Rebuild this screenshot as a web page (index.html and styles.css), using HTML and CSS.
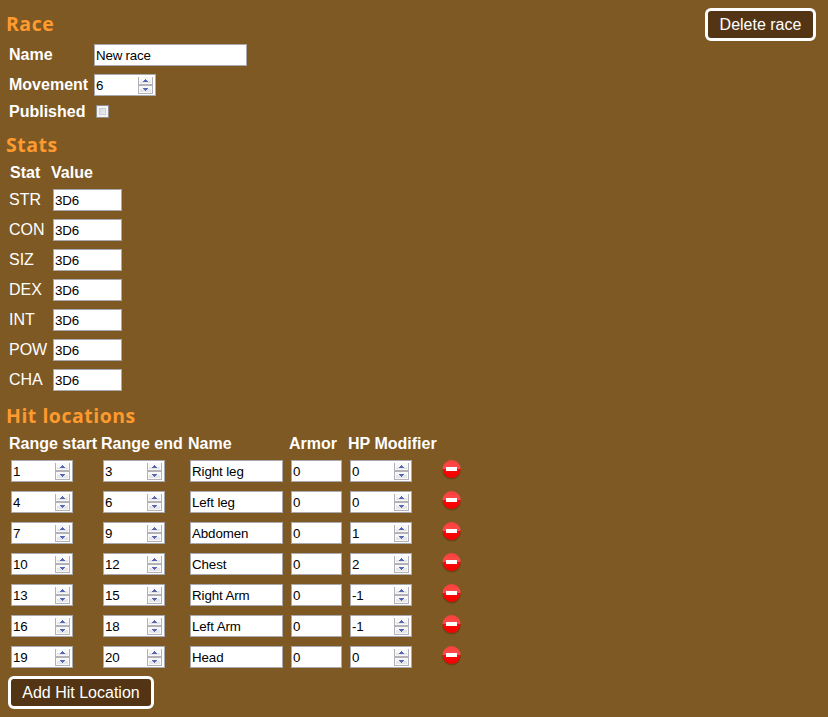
FILE: index.html
```
<!DOCTYPE html>
<html lang="en">
<head>
<meta charset="utf-8">
<title>Race</title>
<link rel="stylesheet" href="styles.css">
</head>
<body>
<svg width="0" height="0" class="defs">
<defs>
<linearGradient id="red" x1="0" y1="0" x2="0" y2="1"><stop offset="0" stop-color="#f8403c"/><stop offset=".5" stop-color="#ff4a4a"/><stop offset=".52" stop-color="#fb0808"/><stop offset="1" stop-color="#f40000"/></linearGradient>
<symbol id="remove" viewBox="0 0 22 22"><ellipse cx="10.6" cy="12.8" rx="9.2" ry="8.8" fill="#4a2d0c" opacity=".4"/><circle cx="10.6" cy="11" r="9" fill="url(#red)"/><rect x="5" y="9" width="11" height="4" fill="#fff"/></symbol>
<symbol id="spin" viewBox="0 0 15 17"><path d="M0 0h15v17H0z" fill="#b2b2b8"/><path d="M1 0h13v7H1zM1 9h13v7H1z" fill="#f8f8f8"/><path d="M2 4h11v2H2zM2 12h11v3H2z" fill="#e6e6e8"/><path d="M7 2h1v1h1v1h1v1H5V4h1V3h1zM5 11h5v1H9v1H8v1H7v-1H6v-1H5z" fill="#5668b4"/></symbol>
</defs>
</svg>
<main>
<header class="top"><h2>Race</h2><button class="btn delete">Delete race</button></header>
<section class="details">
<label for="name">Name</label><span class="field"><input id="name" value="New race"></span>
<label for="move">Movement</label><span class="field num"><input id="move" value="6"><svg><use href="#spin"/></svg></span>
<label for="pub">Published</label><input id="pub" class="check" type="checkbox">
</section>
<h2 class="stats-title">Stats</h2>
<section class="stats" id="stats"><b>Stat</b><b class="value">Value</b></section>
<h2 class="hits-title">Hit locations</h2>
<section>
<div class="hit head"><b>Range start</b><b>Range end</b><b>Name</b><b>Armor</b><b>HP Modifier</b></div>
<div id="hits"></div>
</section>
<button class="btn add">Add Hit Location</button>
</main>
<script src="app.js"></script>
</body>
</html>
```
FILE: styles.css
```
body { margin: 0; background: #7e5923; color: #fff; font: 16px/18px "Liberation Sans", Arial, sans-serif; }
.defs { position: absolute; }
main { height: 717px; overflow: hidden; padding: 0 12px 0 6px; box-sizing: border-box; }
h2 { margin: 0; font: 700 19.5px/24px "Open Sans", sans-serif; letter-spacing: .5px; color: #ff9a2e; }
.top { display: flex; justify-content: space-between; height: 40px; padding-top: 8px; box-sizing: border-box; }
.top h2 { padding-top: 4px; }
.btn { height: 33px; box-sizing: border-box; padding: 0; border: 3px solid #fff; border-radius: 6px; background: #533414; color: #fff; font: 16px/26px "Liberation Sans", Arial, sans-serif; white-space: nowrap; }
.delete { width: 111px; }
.add { display: block; width: 146px; margin: 4px 0 0 2px; }
.details { display: grid; grid-template-columns: 85px max-content; grid-template-rows: 30px 30px 24px; align-items: center; padding-left: 3px; font-weight: bold; }
.field { display: block; box-sizing: border-box; position: relative; width: 153px; height: 22px; border: 1px solid #a9a9b0; background: #fff; }
.field input { display: block; box-sizing: border-box; width: 100%; height: 20px; margin: 0; padding: 1px 1px 1px; border: 0; outline: 0; background: none; color: #000; font: 13.33px/18px "Liberation Sans", Arial, sans-serif; letter-spacing: -.2px; }
.num { width: 62px; }
.num svg { position: absolute; right: 2px; top: 2px; width: 15px; height: 17px; }
.check { appearance: none; box-sizing: border-box; width: 13px; height: 13px; margin: -1px 0 0 2px; border: 1px solid #8e8f8f; background: linear-gradient(135deg, #cbcfd5, #f6f6f6); box-shadow: inset 0 0 0 2px #f4f4f4, inset 0 0 0 3px #cdd0d6; }
.stats-title { margin-top: 9px; }
.stats { display: grid; grid-template-columns: 44px 70px; grid-template-rows: 28px; grid-auto-rows: 30px; align-items: center; padding-left: 3px; }
.stats .value { margin-left: -2px; }
.stats b { margin-top: 3px; margin-left: 1px; }
.stats .field { width: 69px; }
.hits-title { margin-top: 9px; }
.hit { display: grid; grid-template-columns: 92px 87px 101px 59px 91px 22px; align-items: center; height: 31px; padding-left: 5px; }
.hit.head { height: 27px; }
.head b { margin: 4px 0 0 -2px; white-space: nowrap; }
.hit .field input { padding-top: 2px; padding-bottom: 0; letter-spacing: -.1px; }
.hit .name { width: 93px; }
.hit .armor { width: 51px; }
.remove { width: 22px; height: 22px; margin-top: -3px; }
```
FILE: app.js
```
const field = (value, cls = "") => `<span class="field ${cls}"><input value="${value}">${cls === "num" ? '<svg><use href="#spin"/></svg>' : ""}</span>`;
document.getElementById("stats").innerHTML += ["STR", "CON", "SIZ", "DEX", "INT", "POW", "CHA"]
  .map(s => `<span>${s}</span>${field("3D6")}`).join("");
document.getElementById("hits").innerHTML = [
  [1, 3, "Right leg", 0, 0], [4, 6, "Left leg", 0, 0], [7, 9, "Abdomen", 0, 1], [10, 12, "Chest", 0, 2],
  [13, 15, "Right Arm", 0, -1], [16, 18, "Left Arm", 0, -1], [19, 20, "Head", 0, 0]
].map(([a, b, n, ar, hp]) => `<div class="hit">${field(a, "num")}${field(b, "num")}${field(n, "name")}${field(ar, "armor")}${field(hp, "num")}<svg class="remove"><use href="#remove"/></svg></div>`).join("");
```
